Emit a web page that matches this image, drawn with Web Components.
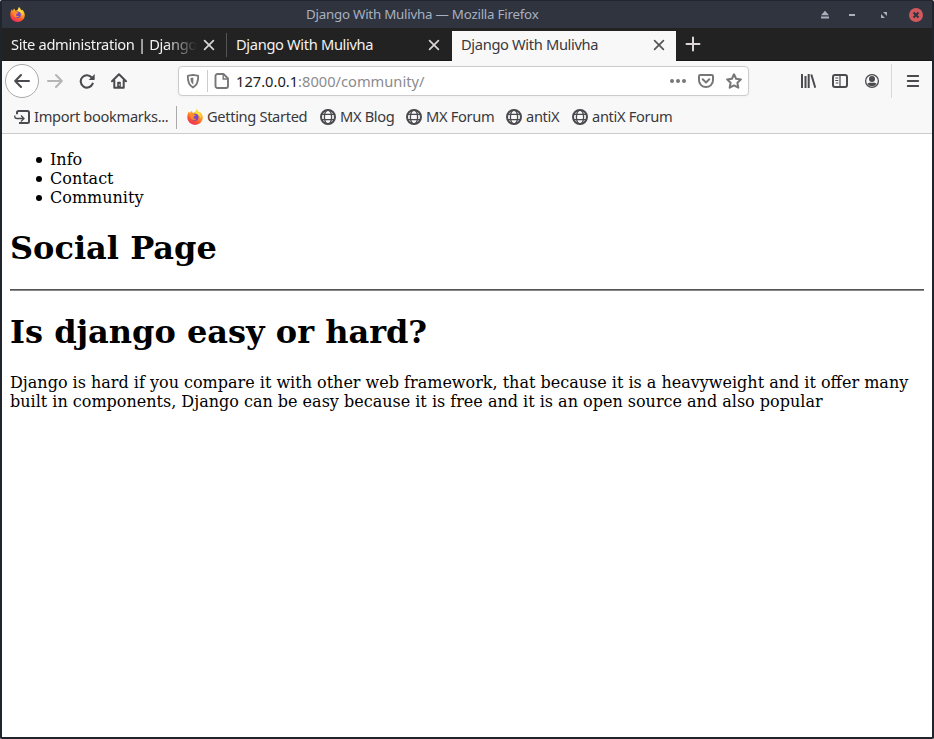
<!DOCTYPE html>
<html lang="en">
<head>
<meta charset="utf-8">
<title>Django With Mulivha</title>
<style>
html, body { margin: 0; height: 100%; overflow: hidden; background: #fff; }
</style>
</head>
<body>
<browser-window></browser-window>
<script>
const ICONS = {
  firefox: `<defs><linearGradient id="o" x1=".8" y1="0" x2=".3" y2="1"><stop offset="0" stop-color="#ffe63f"/><stop offset=".4" stop-color="#ffa026"/><stop offset=".7" stop-color="#fb5a2b"/><stop offset="1" stop-color="#ee2765"/></linearGradient></defs>
    <path fill="url(#o)" d="M9.500 .2c1.200.8 1.600 1.700 2.100 3 1 .3 1.400.2 1.600-.3 1.700 1.800 2.600 3.800 2.600 5.900a7.700 7.100 0 0 1-15.500 0C.2 6.600.8 4.500 1.800 2.500l1 1.600C3.400 3.500 3.900 2.700 4.200 1.700c.8.5 1.400 1.300 1.600 2.300C7.200 3.700 9 2.600 9.500 .2z"/>
    <path fill="#ffdf3c" d="M9.500 .2c1.200.8 1.600 1.700 2.100 3 1.800 1.300 2.800 3.700 2.300 6C12.800 5.700 10.500 5.500 8.600 4.200 7.600 3.300 9.200 1.700 9.500 .2z"/>
    <circle cx="8" cy="8.300" r="3.500" fill="#7545cf"/><path fill="#ff8b29" d="M3 5c1.400-.8 3-.7 4.300.4L9 6.200c-.4.9-2 .8-2.400 1.700-.5 1.500 1.300 2.200 3 1.600-1 2-4.500 2-5.500-.2C3.200 7.900 2.600 6.600 3 5z"/>`,
  close: `<path d="M3.600 3.600l8.800 8.800M12.400 3.600l-8.800 8.800" stroke="currentColor" stroke-width="1.700" stroke-linecap="round" fill="none"/>`,
  plus: `<path d="M8 1.500v13M1.500 8h13" stroke="currentColor" stroke-width="2" stroke-linecap="round"/>`,
  back: `<path d="M15 8H1.500M7 2L1.200 8 7 14" fill="none" stroke="currentColor" stroke-width="2" stroke-linecap="round" stroke-linejoin="round"/>`,
  forward: `<path d="M1 8h13.500M9 2l5.800 6L9 14" fill="none" stroke="currentColor" stroke-width="2" stroke-linecap="round" stroke-linejoin="round"/>`,
  reload: `<path d="M13 4.800A6.200 6.200 0 1 0 13.700 10.700" fill="none" stroke="currentColor" stroke-width="2.100" stroke-linecap="round"/><path d="M15.700 1v5.300a.7.700 0 0 1-.7.700H9.700z" fill="currentColor"/>`,
  home: `<path d="M1 8.300L8 1.300l7 7M3.300 7.500v7.200h9.400V7.500" fill="none" stroke="currentColor" stroke-width="2" stroke-linecap="round" stroke-linejoin="round"/><path d="M6.200 14V9.600q0-.8.800-.8h2q.8 0 .8.800V14z" fill="currentColor"/><path d="M8.300 11.300v1.200" stroke="#fff" stroke-width="1"/>`,
  shield: `<path d="M8 1.800c2 .5 3.700.6 5.200 1 .2 5.800-.8 9.300-5.200 11.700C3.600 12.100 2.600 8.600 2.800 2.800 4.300 2.400 6 2.300 8 1.800z" fill="none" stroke="currentColor" stroke-width="1.800" stroke-linejoin="round"/><path d="M8.300 4.600v7.200C6.100 10 5.500 7.600 5.500 5z" fill="currentColor"/>`,
  page: `<path d="M3.500 1h6l4.500 4.500V13a2 2 0 0 1-2 2H3.500a2 2 0 0 1-2-2V3a2 2 0 0 1 2-2z" fill="none" stroke="currentColor" stroke-width="1.900" stroke-linejoin="round"/><path d="M9.200 1.500V6h4.500" fill="none" stroke="currentColor" stroke-width="1.400"/>`,
  dots: `<circle cx="2" cy="8" r="2" fill="currentColor"/><circle cx="8" cy="8" r="2" fill="currentColor"/><circle cx="14" cy="8" r="2" fill="currentColor"/>`,
  pocket: `<path d="M2.200 2h11.600q1.200 0 1.200 1.200V7.300a7 6.800 0 0 1-14 0V3.200Q1 2 2.200 2z" fill="none" stroke="currentColor" stroke-width="2"/><path d="M4.700 6.300L8 9.500l3.300-3.200" fill="none" stroke="currentColor" stroke-width="2" stroke-linecap="round" stroke-linejoin="round"/>`,
  star: `<path d="M8 1.300l2.100 4.400 4.800.7-3.500 3.400.9 4.900L8 12.400l-4.300 2.300.9-4.900L1.100 6.400l4.800-.7z" fill="none" stroke="currentColor" stroke-width="2" stroke-linejoin="round"/>`,
  library: `<path d="M2 1v14M5.500 3v12M8.700 1v14" stroke="currentColor" stroke-width="2"/><path d="M11.300 1.500l4 13.300" stroke="currentColor" stroke-width="2"/>`,
  sidebar: `<rect x="1" y="2" width="14" height="12" rx="2" fill="none" stroke="currentColor" stroke-width="2"/><path d="M8 2v12M3.300 5h3M3.300 7.500h3M3.800 10h2.500" stroke="currentColor" stroke-width="1.200"/>`,
  account: `<circle cx="8" cy="8" r="6.400" fill="none" stroke="currentColor" stroke-width="1.300"/><circle cx="8" cy="6" r="3" fill="currentColor"/><path d="M3.600 11c.8-1.700 2.300-1.200 4.400-1.200s3.600-.5 4.400 1.200A5.400 5.400 0 0 1 8 13.300 5.400 5.400 0 0 1 3.600 11z" fill="currentColor"/>`,
  menu: `<path d="M2.800 3h10.400M2.800 8h10.400M2.800 13h10.400" stroke="currentColor" stroke-width="2" stroke-linecap="round"/>`,
  importer: `<path d="M3 5.300V3.500Q3 2 4.500 2h9Q15 2 15 3.500v9q0 1.500-1.500 1.500H5" fill="none" stroke="currentColor" stroke-width="2"/><path d="M.8 6.500v1Q.8 9.500 3 9.500h6.500M7 6.500l3 3-3 3" fill="none" stroke="currentColor" stroke-width="1.300"/>`,
  globe: `<g fill="none" stroke="currentColor"><circle cx="8" cy="8" r="7" stroke-width="2"/><ellipse cx="8" cy="8" rx="3.600" ry="7" stroke-width="1.300"/><path d="M1.800 5.300h12.400M1.800 10.700h12.400" stroke-width="1.300"/></g>`,
  eject: `<path d="M8 3.700l4 4.600H4zM4 9.500h8v2H4z" fill="currentColor"/>`,
  minimize: `<path d="M5 7h6v2H5z" fill="currentColor"/>`,
  maximize: `<path d="M7 5h4v4zM5 7v4h4z" fill="currentColor"/>`,
  quit: `<circle cx="8" cy="8" r="7" fill="#d1585e"/><path d="M5.500 5.500l5 5M10.500 5.500l-5 5" stroke="#2f343f" stroke-width="2"/>`
};

function define(name, css, html) {
  customElements.define(name, class extends HTMLElement {
    connectedCallback() {
      if (this.shadowRoot) return;
      const t = document.createElement('template');
      t.innerHTML = `<style>:host,*{box-sizing:border-box}${css}</style>${typeof html === 'function' ? html(this) : html}`;
      this.attachShadow({ mode: 'open' }).append(t.content.cloneNode(true));
    }
  });
}

define('ui-icon', `:host{display:block;flex:none;width:16px;height:16px}svg{display:block;width:100%;height:100%}`,
  el => `<svg viewBox="0 0 16 16" aria-hidden="true">${ICONS[el.getAttribute('name')]}</svg>`);

define('title-bar', `
  :host{display:grid;grid-template-columns:296px 1fr auto;align-items:center;flex:none;height:28px;padding:0 8px 0 8px;background:#2f343f;border-top:1px solid #22252e;color:#a9b0bf;font:13.33px/18px "Noto Sans",sans-serif;letter-spacing:-.23px}
  .title{white-space:nowrap;padding-bottom:2px}
  .app{width:15px;height:15px}
  .controls{display:flex;justify-content:flex-end;color:#a9b0bf}
  .controls ui-icon+ui-icon{margin-left:11px}
  .controls ui-icon:nth-child(3),.controls ui-icon:nth-child(4){margin-left:16px}`,
  `<ui-icon class="app" name="firefox"></ui-icon><span class="title"><slot></slot></span>
  <div class="controls"><ui-icon name="eject"></ui-icon><ui-icon name="minimize"></ui-icon><ui-icon name="maximize"></ui-icon><ui-icon name="quit"></ui-icon></div>`);

define('browser-tab', `
  :host{display:flex;align-items:center;flex:none;width:225px;height:33px;padding:0 10px 0 9px;color:#f2f2f2;position:relative}
  :host([active]){background:#f8f8f8;color:#38383d;border-top:3px solid #222;width:224px;padding-right:9px}
  :host([active]) .label,:host([active]) ui-icon{margin-top:-3px}
  :host([divider])::after{content:"";position:absolute;right:0;top:5px;height:24px;width:1px;background:#555}
  .label{flex:1;overflow:hidden;white-space:nowrap;line-height:22px;padding-bottom:2px}
  :host([fade]) .label{-webkit-mask-image:linear-gradient(to left,transparent,#000 32px);mask-image:linear-gradient(to left,transparent,#000 32px)}
  ui-icon{margin-left:4px;color:#d8d4d4}
  :host([active]) ui-icon{color:#555}`,
  `<span class="label"><slot></slot></span><ui-icon name="close"></ui-icon>`);

define('tab-strip', `
  :host{display:flex;align-items:center;flex:none;height:33px;background:#222;box-shadow:inset 0 -1px #161616;color:#ddd6d6;font:14.67px/22px "Noto Sans",sans-serif;letter-spacing:-.34px}
  .new{margin:-2px 0 0 9px}`,
  `<slot></slot><ui-icon class="new" name="plus"></ui-icon>`);

define('tool-button', `
  :host{display:flex;flex:none;width:32px;height:34px;align-items:center;justify-content:center;color:#4a4a4f}
  :host([round]){width:34px;background:#fff;border:1px solid #aaa;border-radius:50%}
  :host([disabled]){color:#b5b5b5}`,
  el => `<ui-icon name="${el.getAttribute('icon')}"></ui-icon>`);

define('url-bar', `
  :host{display:flex;align-items:center;flex:none;width:571px;height:30px;margin-left:43px;padding:0 6px;border:1px solid #ccc;border-radius:4px;background:#fff;box-shadow:0 1px 3px #0000000a;color:#77777a}
  i{width:1px;height:22px;background:#ccc;margin:0 6px}
  .text{flex:1;margin-left:6px;color:#8b8b8e;white-space:nowrap;line-height:22px}
  b{font-weight:400;color:#1c1c20}
  ui-icon+ui-icon{margin-left:12px}`,
  `<ui-icon name="shield"></ui-icon><i></i><ui-icon name="page"></ui-icon>
   <span class="text"><b><slot name="host"></slot></b><slot></slot></span>
   <ui-icon name="dots"></ui-icon><ui-icon name="pocket"></ui-icon><ui-icon name="star"></ui-icon>`);

define('nav-bar', `
  :host{display:flex;align-items:center;flex:none;height:40px;padding:0 3px;background:#f8f8f8;font:14.67px/22px "Noto Sans",sans-serif}
  .gap{width:43px}
  .sep{width:1px;height:34px;background:#d9d9d9;margin:0 5px 0 3px}`,
  `<tool-button icon="back" round></tool-button><tool-button icon="forward" disabled></tool-button><tool-button icon="reload"></tool-button><tool-button icon="home"></tool-button>
   <slot></slot><span class="gap"></span>
   <tool-button icon="library"></tool-button><tool-button icon="sidebar"></tool-button><tool-button icon="account"></tool-button><span class="sep"></span><tool-button icon="menu"></tool-button>`);

define('bookmark-item', `
  :host{display:flex;align-items:center;flex:none;white-space:nowrap;color:#4a4a4f}
  span{margin-left:4px;color:#38383d;padding-bottom:2px}
  :host([divider]){border-right:1px solid #aaa;height:23px;margin-right:10px}`,
  el => `<ui-icon name="${el.getAttribute('icon')}"></ui-icon><span><slot></slot></span>`);

define('bookmark-bar', `
  :host{display:flex;align-items:center;flex:none;height:33px;padding:0 0 0 12px;background:#f8f8f8;border-bottom:1px solid #ccc;font:14.67px/22px "Noto Sans",sans-serif;letter-spacing:-.34px}`,
  `<slot></slot>`);

define('web-page', `
  :host{display:block;flex:1;background:#fff;color:#000;padding:16px 8px 0;font:16px/19px "DejaVu Serif",serif}
  ul{margin:0 0 22px;padding-left:40px;list-style:none}
  li::before{content:"";display:inline-block;width:6px;height:6px;border-radius:50%;background:#000;margin:0 8px 0 -14px;vertical-align:2px}
  h1{margin:0;font-size:32px;line-height:38px;font-weight:700}
  hr{margin:22px 0 22px;border:0;height:2px;background:linear-gradient(#555 50%,#888 50%)}
  p{margin:22px 0 0}`,
  `<ul><li>Info</li><li>Contact</li><li>Community</li></ul><h1>Social Page</h1><hr><h1>Is django easy or hard?</h1>
   <p>Django is hard if you compare it with other web framework, that because it is a heavyweight and it offer many built in components, Django can be easy because it is free and it is an open source and also popular</p>`);

define('browser-window', `
  :host{display:flex;flex-direction:column;width:934px;height:739px;border:solid #20242c;border-width:0 2px 2px;border-radius:2px;overflow:hidden}`,
  `<title-bar>Django With Mulivha — Mozilla Firefox</title-bar>
   <tab-strip><browser-tab fade divider>Site administration | Django</browser-tab><browser-tab>Django With Mulivha</browser-tab><browser-tab active>Django With Mulivha</browser-tab></tab-strip>
   <nav-bar><url-bar><span slot="host">127.0.0.1</span>:8000/community/</url-bar></nav-bar>
   <bookmark-bar>
     <bookmark-item icon="importer" divider style="width:163px">Import bookmarks...</bookmark-item>
     <bookmark-item icon="firefox" style="width:133px">Getting Started</bookmark-item>
     <bookmark-item icon="globe" style="width:86px">MX Blog</bookmark-item>
     <bookmark-item icon="globe" style="width:100px">MX Forum</bookmark-item>
     <bookmark-item icon="globe" style="width:66px">antiX</bookmark-item>
     <bookmark-item icon="globe">antiX Forum</bookmark-item>
   </bookmark-bar>
   <web-page></web-page>`);
</script>
</body>
</html>
